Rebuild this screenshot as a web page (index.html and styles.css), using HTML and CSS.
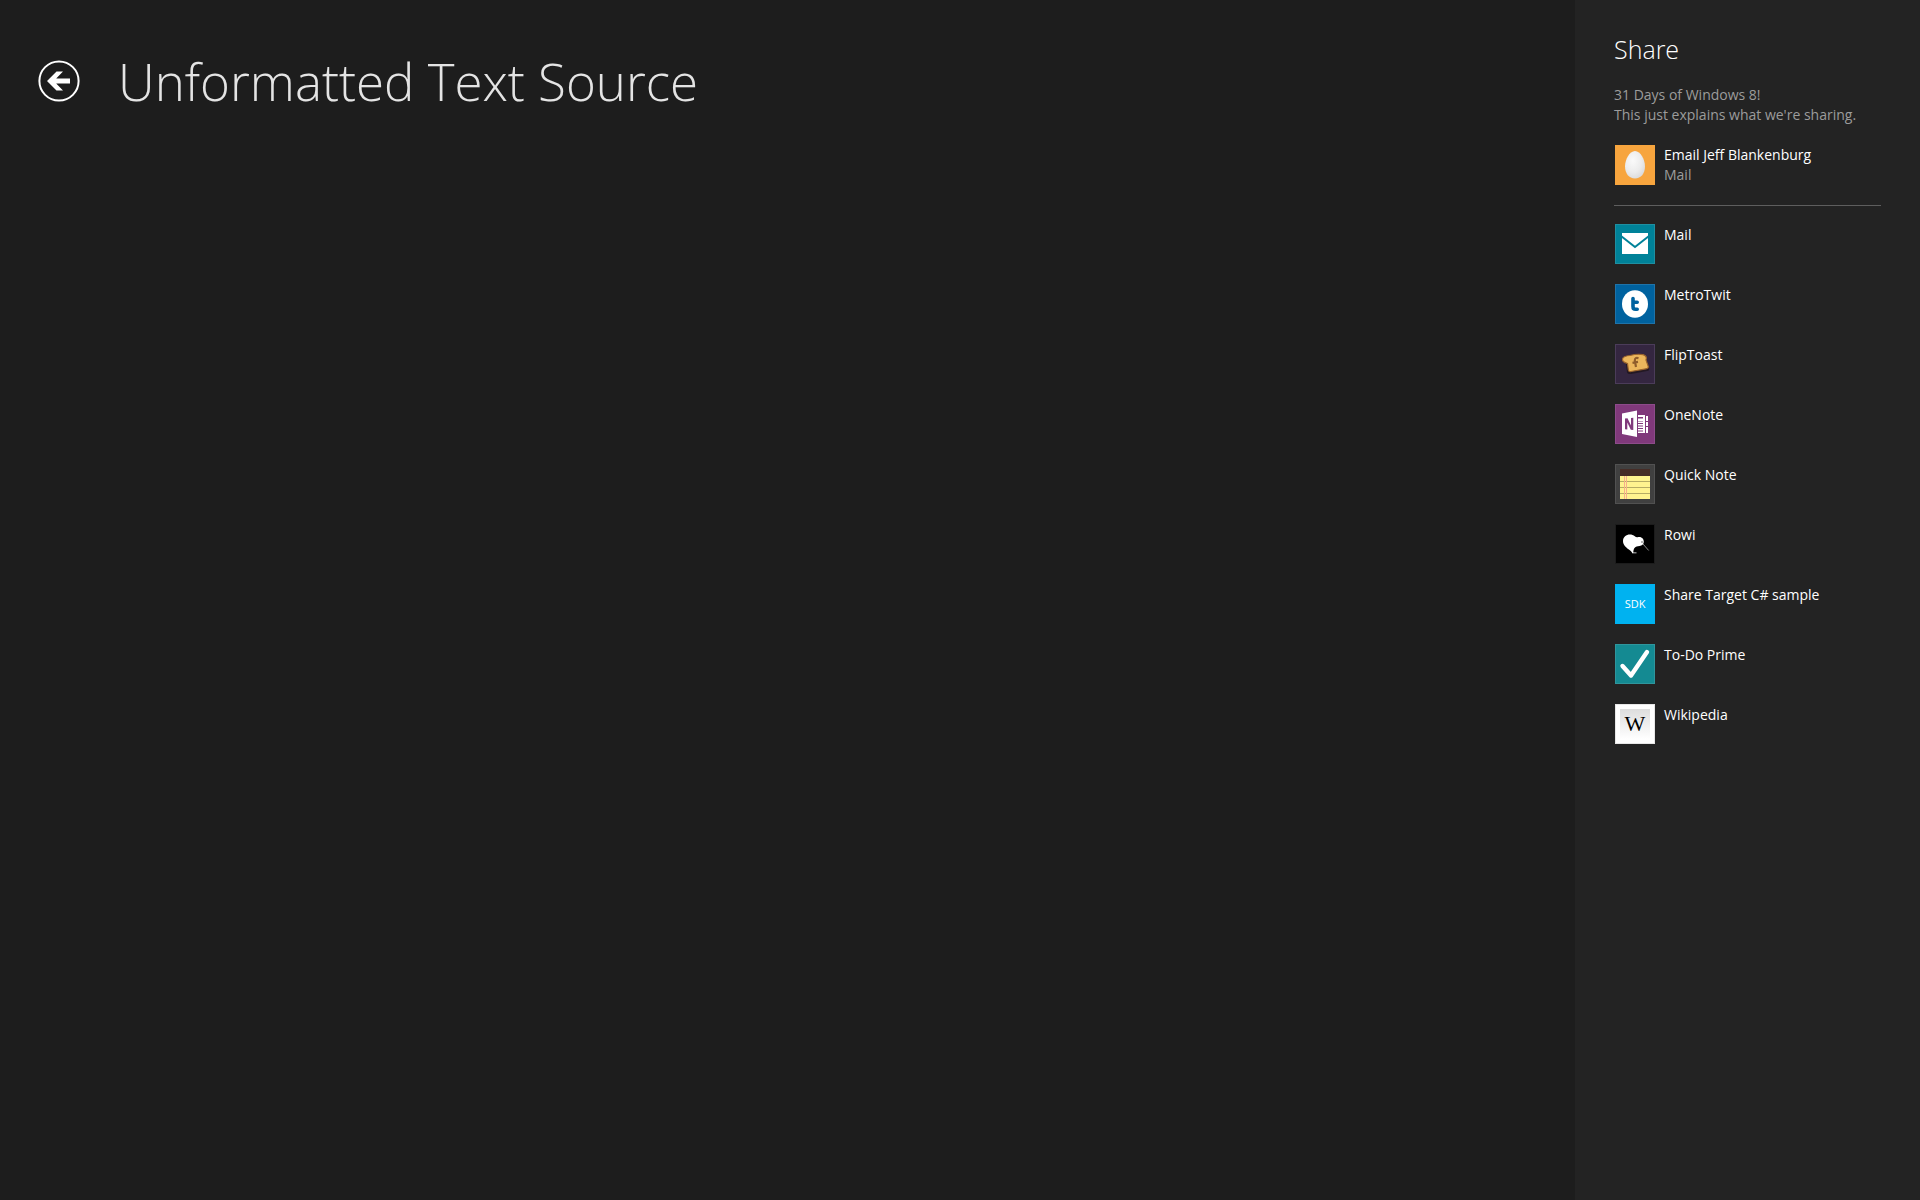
FILE: index.html
```html
<!DOCTYPE html>
<html lang="en">
<head>
<meta charset="utf-8">
<meta name="viewport" content="width=device-width, initial-scale=1">
<title>Unformatted Text Source</title>
<link rel="stylesheet" href="styles.css">
</head>
<body>
<div class="screen">
  <main class="page">
    <header class="page-header">
      <button class="back" type="button" aria-label="Back">
        <svg viewBox="0 0 42 42" width="42" height="42" aria-hidden="true">
          <circle cx="21" cy="21" r="19.6" fill="none" stroke="#fff" stroke-width="2"/>
          <path d="M9 21 18.500 11.500H25L18.200 18.400H32V23.600H18.200L25 30.500H18.500Z" fill="#fff"/>
        </svg>
      </button>
      <h1 class="title">Unformatted Text Source</h1>
    </header>
  </main>
  <aside class="share">
    <h2 class="share-title">Share</h2>
    <p class="summary">31 Days of Windows 8!<br>This just explains what we're sharing.</p>
    <a class="target quick" href="#">
      <svg class="icon" viewBox="0 0 40 40" aria-hidden="true">
        <defs>
          <radialGradient id="egg" cx=".4" cy=".35" r=".7"><stop offset="0" stop-color="#fafafa"/><stop offset=".6" stop-color="#ececec"/><stop offset="1" stop-color="#dadada"/></radialGradient>
        </defs>
        <path fill="#f7a53e" d="M0 0H40V40H0Z"/>
        <path fill="url(#egg)" d="M20 6C25.500 6 30 14.500 30 21.500C30 28.500 26 33.500 20 33.500S10 28.500 10 21.500C10 14.500 14.500 6 20 6Z"/>
      </svg>
      <span class="label">Email Jeff Blankenburg<span class="via">Mail</span></span>
    </a>
    <ul class="targets">
      <li><a class="target" href="#">
        <svg class="icon" viewBox="0 0 40 40" aria-hidden="true">
          <path fill="#1f8fa1" d="M0 0H40V40H0Z"/><path fill="#008299" d="M1 1H39V39H1Z"/>
          <path fill="#fff" d="M7 9H33V30H7Z"/>
          <path fill="none" stroke="#008299" stroke-width="2" d="M6 12 20 23 34 12"/>
        </svg>
        <span class="label">Mail</span></a></li>
      <li><a class="target" href="#">
        <svg class="icon" viewBox="0 0 40 40" aria-hidden="true">
          <path fill="#1f73a9" d="M0 0H40V40H0Z"/><path fill="#00629f" d="M1 1H39V39H1Z"/>
          <ellipse cx="20" cy="20" rx="13" ry="13.700" fill="#fff"/>
          <path fill="none" stroke="#00629f" stroke-width="3.600" stroke-linecap="round" stroke-linejoin="round" d="M18 14.500V22.500Q18 25.300 20.500 25.300H22.200M18 18.200H22.200"/>
        </svg>
        <span class="label">MetroTwit</span></a></li>
      <li><a class="target" href="#">
        <svg class="icon" viewBox="0 0 40 40" aria-hidden="true">
          <path fill="#4b3c59" d="M0 0H40V40H0Z"/><path fill="#342640" d="M1 1H39V39H1Z"/>
          <path fill="#231823" d="M6.500 15Q10 18 11 20L12 28.500Q13 30.500 16 30L33.500 26.800Q35 25 33.500 22L31 14Z"/>
          <path fill="#ebb65c" stroke="#9a642d" stroke-width="1.200" d="M7.500 15Q8 12 15 11.500Q22 9.600 28 10.600Q32.500 12 31 16L33.300 22.500Q33.600 24.500 31 24.800L16 27.500Q13.500 28 13.300 25.500L12.500 19.500Q7 18 7.500 15Z"/>
          <path fill="none" stroke="#8f5d2b" stroke-width="2.200" d="M23.500 14.200Q20 13 19.800 16.500L21 23M17.500 18.800 23 17.800"/>
        </svg>
        <span class="label">FlipToast</span></a></li>
      <li><a class="target" href="#">
        <svg class="icon" viewBox="0 0 40 40" aria-hidden="true">
          <path fill="#8d4b8a" d="M0 0H40V40H0Z"/><path fill="#80397b" d="M1 1H39V39H1Z"/>
          <path fill="#fff" d="M7 9.500 22 6.500V33L7 30Z"/>
          <path fill="#80397b" d="M10 14.500 12.500 14.300 16 21.500V14L18.300 13.800V26L15.800 25.800 12.300 18.500V25.500L10 25.300Z"/>
          <path fill="#fff" d="M23 11H30V13H23ZM23 14.500H30V17H23ZM23 20H30V21.500H23ZM23 25H30V26.500H23ZM23 27.500H30V29H23ZM28 11H30V29H28ZM31 12H33V17H31ZM31 18H33V22H31ZM31 23H33V29H31Z"/>
          <path fill="#fff" d="M23 17.500H28V19H23ZM23 22.500H28V24H23Z"/>
        </svg>
        <span class="label">OneNote</span></a></li>
      <li><a class="target" href="#">
        <svg class="icon" viewBox="0 0 40 40" aria-hidden="true">
          <path fill="#515151" d="M0 0H40V40H0Z"/><path fill="#404040" d="M1 1H39V39H1Z"/>
          <path fill="#462d27" d="M5 5H35V12H5Z"/><path fill="#fff38f" d="M5 12H35V35H5Z"/>
          <path stroke="#b6ac65" d="M5 17.500H35M5 23.500H35M5 29.500H35"/>
          <path stroke="#f7b08c" d="M9.500 12V35M11.500 12V35"/>
        </svg>
        <span class="label">Quick Note</span></a></li>
      <li><a class="target" href="#">
        <svg class="icon" viewBox="0 0 40 40" aria-hidden="true">
          <path fill="#1c1c1c" d="M0 0H40V40H0Z"/><path fill="#000" d="M1 1H39V39H1Z"/>
          <path fill="#fff" d="M8 17C8 12 13 9.500 17.500 11C19.500 11.700 20.500 13.500 22.500 13.200C26.500 12 29 15 28.800 18C28.700 20.500 27 21.500 24.500 22C20 22.300 18.500 24 18.300 28.500H21.500V29.300H17C17.500 28.700 16.500 28 15.500 26.800C11 23.500 8 21 8 17Z"/>
          <path fill="none" stroke="#888" d="M28 20 33.700 26.500"/><circle cx="27" cy="18" r=".8" fill="#555"/>
        </svg>
        <span class="label">Rowi</span></a></li>
      <li><a class="target" href="#">
        <svg class="icon" viewBox="0 0 40 40" aria-hidden="true">
          <path fill="#00b2f0" d="M0 0H40V40H0Z"/>
          <text class="sdk" x="20" y="24">SDK</text>
        </svg>
        <span class="label">Share Target C# sample</span></a></li>
      <li><a class="target" href="#">
        <svg class="icon" viewBox="0 0 40 40" aria-hidden="true">
          <path fill="#2f959c" d="M0 0H40V40H0Z"/><path fill="#148a92" d="M1 1H39V39H1Z"/>
          <path fill="none" stroke="#fff" stroke-width="4.400" stroke-linecap="round" stroke-linejoin="round" d="M7.500 22 16 31.500 32 8"/>
        </svg>
        <span class="label">To-Do Prime</span></a></li>
      <li><a class="target" href="#">
        <svg class="icon" viewBox="0 0 40 40" aria-hidden="true">
          <defs><linearGradient id="paper" x2="0" y2="1"><stop stop-color="#ddd"/><stop offset="1" stop-color="#fff"/></linearGradient></defs>
          <path fill="#e7e7e7" d="M0 0H40V40H0Z"/><path fill="#fff" d="M1 1H39V39H1Z"/>
          <path fill="url(#paper)" d="M5 5H35V35H5Z"/>
          <text class="wiki" x="20" y="27">W</text>
        </svg>
        <span class="label">Wikipedia</span></a></li>
    </ul>
  </aside>
</div>
</body>
</html>
```
FILE: styles.css
```css
* {
  box-sizing: border-box;
}

body {
  margin: 0;
  background: #1d1d1d;
  color: #fff;
  font-family: "Open Sans", "Noto Sans", sans-serif;
}

.screen {
  display: flex;
  min-height: 100vh;
}

.page {
  flex: 1;
}

.page-header {
  display: flex;
  align-items: center;
  gap: 38px;
  padding: 41px 38px;
}

.back {
  width: 42px;
  height: 42px;
  padding: 0;
  border: 0;
  background: none;
  cursor: pointer;
}

.back svg {
  display: block;
}

.title {
  margin: 0;
  color: #e4e4e4;
  font-size: 51px;
  font-weight: 300;
  line-height: 80px;
}

.share {
  width: 345px;
  padding: 31px 39px;
  background: #232323;
  font-size: 14px;
  line-height: 20px;
}

.share-title {
  margin: 0;
  font-size: 25px;
  font-weight: 300;
  line-height: 36px;
}

.summary {
  margin: 18px 0 20px;
  color: #9c9c9c;
  white-space: nowrap;
}

.target {
  display: flex;
  gap: 9px;
  padding-left: 1px;
  color: #fff;
  text-decoration: none;
}

.icon {
  flex: none;
  width: 40px;
  height: 40px;
}

.via {
  display: block;
  color: #9c9c9c;
}

.quick {
  padding-bottom: 20px;
  border-bottom: 1px solid #5e5e5e;
}

.targets {
  display: grid;
  gap: 20px;
  margin: 18px 0 0;
  padding: 0;
  list-style: none;
}

.targets .label {
  padding-top: 1px;
}

.sdk {
  fill: #fff;
  font-size: 11px;
  text-anchor: middle;
}

.wiki {
  fill: #000;
  font-family: "Liberation Serif", serif;
  font-size: 22px;
  text-anchor: middle;
}
```
